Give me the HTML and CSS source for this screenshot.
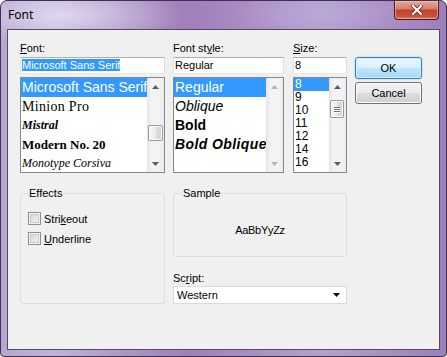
FILE: index.html
```html
<!DOCTYPE html>
<html lang="en">
<head>
    <meta charset="UTF-8">
    <meta name="viewport" content="width=device-width, initial-scale=1.0">
    <title>Font</title>
    <link rel="stylesheet" href="styles.css">
</head>
<body>
    <div class="window">
        <div class="titlebar">
            <span class="title">Font</span>
            <button class="close-btn" aria-label="Close">
                <svg width="12" height="10" viewBox="0 0 12 10">
                    <path d="M2 1 L10 9 M10 1 L2 9" stroke="#5a1a10" stroke-width="3.6" stroke-linecap="square"/>
                    <path d="M2 1 L10 9 M10 1 L2 9" stroke="#fff" stroke-width="2.2" stroke-linecap="square"/>
                </svg>
            </button>
        </div>

        <div class="client">
            <div class="top-row">
                <!-- Font family -->
                <div class="field font-field">
                    <label class="field-label"><u>F</u>ont:</label>
                    <div class="textbox"><span class="text-sel">Microsoft Sans Serif</span></div>
                    <div class="listbox">
                        <ul class="items font-list">
                            <li class="selected f-mss">Microsoft Sans Serif</li>
                            <li class="f-minion">Minion Pro</li>
                            <li class="f-mistral">Mistral</li>
                            <li class="f-modern">Modern No. 20</li>
                            <li class="f-corsiva">Monotype Corsiva</li>
                        </ul>
                        <div class="vscroll">
                            <div class="arrow"><svg width="7" height="4" viewBox="0 0 7 4"><path d="M0 4 L3.5 0 L7 4 Z" fill="#5c5c5c"/></svg></div>
                            <div class="track"><div class="thumb font-thumb"></div></div>
                            <div class="arrow"><svg width="7" height="4" viewBox="0 0 7 4"><path d="M0 0 L7 0 L3.5 4 Z" fill="#5c5c5c"/></svg></div>
                        </div>
                    </div>
                </div>

                <!-- Font style -->
                <div class="field style-field">
                    <label class="field-label">Font st<u>y</u>le:</label>
                    <div class="textbox">Regular</div>
                    <div class="listbox">
                        <ul class="items font-list">
                            <li class="selected">Regular</li>
                            <li class="s-oblique">Oblique</li>
                            <li class="s-bold">Bold</li>
                            <li class="s-bold-oblique">Bold Oblique</li>
                        </ul>
                        <div class="vscroll">
                            <div class="arrow"><svg width="7" height="4" viewBox="0 0 7 4"><path d="M0 4 L3.5 0 L7 4 Z" fill="#b4b4b4"/></svg></div>
                            <div class="track"></div>
                            <div class="arrow"><svg width="7" height="4" viewBox="0 0 7 4"><path d="M0 0 L7 0 L3.5 4 Z" fill="#b4b4b4"/></svg></div>
                        </div>
                    </div>
                </div>

                <!-- Size -->
                <div class="field size-field">
                    <label class="field-label"><u>S</u>ize:</label>
                    <div class="textbox">8</div>
                    <div class="listbox">
                        <ul class="items size-list">
                            <li class="selected">8</li>
                            <li>9</li>
                            <li>10</li>
                            <li>11</li>
                            <li>12</li>
                            <li>14</li>
                            <li>16</li>
                        </ul>
                        <div class="vscroll">
                            <div class="arrow"><svg width="7" height="4" viewBox="0 0 7 4"><path d="M0 4 L3.5 0 L7 4 Z" fill="#5c5c5c"/></svg></div>
                            <div class="track">
                                <div class="thumb size-thumb">
                                    <span class="grip"></span>
                                    <span class="grip"></span>
                                    <span class="grip"></span>
                                </div>
                            </div>
                            <div class="arrow"><svg width="7" height="4" viewBox="0 0 7 4"><path d="M0 0 L7 0 L3.5 4 Z" fill="#5c5c5c"/></svg></div>
                        </div>
                    </div>
                </div>

                <div class="buttons">
                    <button class="btn btn-default">OK</button>
                    <button class="btn">Cancel</button>
                </div>
            </div>

            <div class="bottom-row">
                <fieldset class="group effects">
                    <legend>Effects</legend>
                    <label class="check"><span class="box"></span><span>Stri<u>k</u>eout</span></label>
                    <label class="check"><span class="box"></span><span><u>U</u>nderline</span></label>
                </fieldset>

                <div class="sample-col">
                    <fieldset class="group sample">
                        <legend>Sample</legend>
                        <div class="sample-text">AaBbYyZz</div>
                    </fieldset>
                    <label class="field-label script-label">Sc<u>r</u>ipt:</label>
                    <div class="combo">
                        <span>Western</span>
                        <svg width="7" height="4" viewBox="0 0 7 4"><path d="M0 0 L7 0 L3.5 4 Z" fill="#000"/></svg>
                    </div>
                </div>
            </div>
        </div>
    </div>
</body>
</html>
```

FILE: styles.css
```css
* {
    margin: 0;
    padding: 0;
    box-sizing: border-box;
}

body {
    width: 447px;
    height: 357px;
    overflow: hidden;
    background-color: #fff;
    font-family: "Liberation Sans", Arial, sans-serif;
    font-size: 11px;
    color: #000;
}

/* Window frame */
.window {
    width: 447px;
    height: 357px;
    display: flex;
    flex-direction: column;
    border: 1px solid #3e3150;
    border-radius: 7px 7px 4px 4px;
    background:
        radial-gradient(ellipse 120px 30px at 60px 14px, rgba(236, 230, 246, 0.7), transparent),
        radial-gradient(ellipse 90px 20px at 320px 12px, rgba(190, 175, 220, 0.6), transparent),
        linear-gradient(90deg, #b7a5d0 0%, #c2b2da 12%, #ae95c8 28%, #a07fbb 42%, #aa8cc4 55%, #b5a0d0 72%, #a88dc2 88%, #9d7fb9 100%);
}

.titlebar {
    height: 28px;
    display: flex;
    justify-content: space-between;
    align-items: flex-start;
    padding-left: 7px;
}

.title {
    font-family: "Noto Sans", "Liberation Sans", sans-serif;
    font-size: 12px;
    line-height: 28px;
    color: #000;
}

.close-btn {
    width: 45px;
    height: 19px;
    margin-right: 7px;
    border: 1px solid #4a1c18;
    border-top: none;
    border-radius: 0 0 4px 4px;
    background: linear-gradient(#e6a899 0%, #d77b69 45%, #c0412b 50%, #c9523a 85%, #d87b62 100%);
    box-shadow: inset 0 0 0 1px rgba(255, 210, 200, 0.5);
    display: flex;
    align-items: center;
    justify-content: center;
}

/* Client area */
.client {
    flex: 1;
    margin: 0 6px 6px;
    border: 1px solid #54496a;
    background-color: #f0f0f0;
    padding: 10px 0 0 12px;
}

.top-row {
    display: flex;
    align-items: flex-start;
}

.field {
    display: flex;
    flex-direction: column;
}

.font-field {
    width: 145px;
    margin-right: 8px;
}

.style-field {
    width: 111px;
    margin-right: 9px;
}

.size-field {
    width: 54px;
    margin-right: 8px;
}

.field-label {
    height: 17px;
    line-height: 17px;
}

.textbox {
    height: 17px;
    margin-bottom: 3px;
    padding: 0 1px;
    line-height: 15px;
    background-color: #fff;
    border: 1px solid;
    border-color: #abadb3 #dbdfe6 #e3e9ef #e2e3ea;
    white-space: nowrap;
    overflow: hidden;
}

.text-sel {
    background-color: #3399ff;
    color: #fff;
}

.listbox {
    height: 96px;
    display: flex;
    background-color: #fff;
    border: 1px solid #828790;
    overflow: hidden;
}

.items {
    flex: 1;
    min-width: 0;
    list-style: none;
    overflow: hidden;
}

.items li {
    padding-left: 1px;
    white-space: nowrap;
    overflow: hidden;
}

.font-list li {
    height: 19px;
    line-height: 19px;
    font-size: 14px;
}

.size-list li {
    height: 13px;
    line-height: 13px;
    font-size: 12px;
}

.items li.selected {
    background-color: #3399ff;
    color: #fff;
}

.f-minion {
    font-family: "Liberation Serif", serif;
    letter-spacing: 0.3px;
}

.font-list .f-mistral {
    font-family: "Liberation Serif", serif;
    font-style: italic;
    font-weight: bold;
    font-size: 12px;
}

.font-list .f-modern {
    font-family: "Liberation Serif", serif;
    font-weight: bold;
    font-size: 13px;
}

.font-list .f-corsiva {
    font-family: "Liberation Serif", serif;
    font-style: italic;
    font-size: 12px;
}

.s-oblique {
    font-style: italic;
}

.s-bold {
    font-weight: bold;
}

.s-bold-oblique {
    font-weight: bold;
    font-style: italic;
    letter-spacing: 0.4px;
}

/* Scrollbars */
.vscroll {
    width: 17px;
    display: flex;
    flex-direction: column;
    background: linear-gradient(90deg, #e4e4e4 0%, #f3f3f3 25%, #f3f3f3 75%, #ebebeb 100%);
}

.arrow {
    height: 17px;
    display: flex;
    align-items: center;
    justify-content: center;
}

.track {
    flex: 1;
}

.thumb {
    width: 15px;
    margin-left: 1px;
    border: 1px solid #979797;
    border-radius: 2px;
    background: linear-gradient(90deg, #f6f6f6 0%, #ececec 50%, #dcdcdc 51%, #d2d2d2 100%);
    box-shadow: inset 0 0 0 1px #fbfbfb;
}

.font-thumb {
    height: 16px;
    margin-top: 30px;
}

.size-thumb {
    height: 18px;
    margin-top: 5px;
    width: 14px;
    display: flex;
    flex-direction: column;
    align-items: center;
    justify-content: center;
    gap: 1px;
}

.grip {
    width: 6px;
    height: 1px;
    background-color: #6e6e6e;
    box-shadow: 0 1px 0 #fff;
}

/* Buttons */
.buttons {
    display: flex;
    flex-direction: column;
    gap: 3px;
    margin-top: 17px;
}

.btn {
    width: 67px;
    height: 22px;
    font-family: "Liberation Sans", Arial, sans-serif;
    font-size: 11px;
    color: #000;
    border: 1px solid #707070;
    border-radius: 3px;
    background: linear-gradient(#f2f2f2 0%, #ebebeb 50%, #dddddd 51%, #cfcfcf 100%);
    box-shadow: inset 0 0 0 1px #fcfcfc;
}

.btn-default {
    border-color: #3c7fb1;
    background: linear-gradient(#eaf6fd 0%, #d9f0fc 50%, #bee6fd 51%, #a7d9f5 100%);
    box-shadow: inset 0 0 0 1px #d2f0fc, 0 0 2px #7fc7ef;
}

/* Lower half */
.bottom-row {
    display: flex;
    align-items: flex-start;
    margin-top: 14px;
}

.group {
    border: 1px solid #d5dfe5;
    border-radius: 3px;
    min-width: 0;
}

.group legend {
    padding: 0 1px;
    line-height: 13px;
}

.effects {
    width: 145px;
    height: 117px;
    margin-right: 8px;
    padding: 12px 7px 0;
    display: flex;
    flex-direction: column;
    gap: 7px;
}

.check {
    display: flex;
    align-items: center;
    gap: 3px;
    height: 13px;
}

.box {
    width: 13px;
    height: 13px;
    border: 1px solid #8e8f8f;
    background: linear-gradient(135deg, #cfd1d5 0%, #e9eaeb 60%, #f7f7f7 100%);
    box-shadow: inset 0 0 0 1px #f4f4f4, inset 0 0 0 2px #c9cbcf;
}

.sample-col {
    width: 174px;
    display: flex;
    flex-direction: column;
}

.sample {
    height: 70px;
    padding: 0 8px;
}

.sample-text {
    padding-top: 24px;
    text-align: center;
    letter-spacing: -0.3px;
    line-height: 13px;
}

.script-label {
    margin-top: 13px;
    height: 16px;
    line-height: 16px;
}

.combo {
    height: 18px;
    display: flex;
    align-items: center;
    justify-content: space-between;
    padding: 0 6px 0 3px;
    background-color: #fff;
    border: 1px solid #dadada;
}
```
